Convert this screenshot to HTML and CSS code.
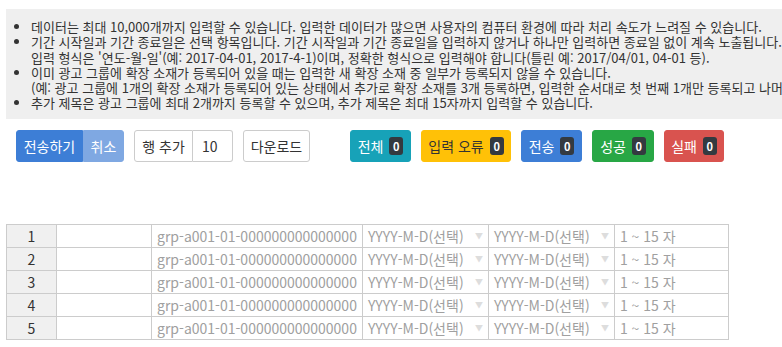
FILE: index.html
```html
<!DOCTYPE html>
<html lang="ko">
<head>
    <meta charset="UTF-8">
    <title>확장 소재 일괄 등록</title>
    <link rel="stylesheet" href="styles.css">
</head>
<body>
    <div class="guide">
        <ul>
            <li>데이터는 최대 10,000개까지 입력할 수 있습니다. 입력한 데이터가 많으면 사용자의 컴퓨터 환경에 따라 처리 속도가 느려질 수 있습니다.</li>
            <li>기간 시작일과 기간 종료일은 선택 항목입니다. 기간 시작일과 기간 종료일을 입력하지 않거나 하나만 입력하면 종료일 없이 계속 노출됩니다.<br>
                입력 형식은 '연도-월-일'(예: 2017-04-01, 2017-4-1)이며, 정확한 형식으로 입력해야 합니다(틀린 예: 2017/04/01, 04-01 등).</li>
            <li>이미 광고 그룹에 확장 소재가 등록되어 있을 때는 입력한 새 확장 소재 중 일부가 등록되지 않을 수 있습니다.<br>
                (예: 광고 그룹에 1개의 확장 소재가 등록되어 있는 상태에서 추가로 확장 소재를 3개 등록하면, 입력한 순서대로 첫 번째 1개만 등록되고 나머지는 등록되지 않습니다.)</li>
            <li>추가 제목은 광고 그룹에 최대 2개까지 등록할 수 있으며, 추가 제목은 최대 15자까지 입력할 수 있습니다.</li>
        </ul>
    </div>

    <div class="toolbar">
        <div class="btn-group">
            <button class="btn btn-primary w-send">전송하기</button>
            <button class="btn btn-light-primary w-cancel">취소</button>
        </div>
        <div class="btn-group">
            <button class="btn btn-default w-add">행 추가</button>
            <input class="row-count" type="text" value="10">
        </div>
        <button class="btn btn-default w-download">다운로드</button>

        <div class="filters">
            <button class="btn btn-info w-all">전체 <span class="badge">0</span></button>
            <button class="btn btn-warning w-error">입력 오류 <span class="badge">0</span></button>
            <button class="btn btn-primary w-all">전송 <span class="badge">0</span></button>
            <button class="btn btn-success w-ok">성공 <span class="badge">0</span></button>
            <button class="btn btn-danger w-fail">실패 <span class="badge">0</span></button>
        </div>
    </div>

    <table class="grid">
        <tbody>
            <tr><th>1</th><td></td><td>grp-a001-01-000000000000000</td><td class="select">YYYY-M-D(선택)<span class="caret">▼</span></td><td class="select">YYYY-M-D(선택)<span class="caret">▼</span></td><td>1 ~ 15 자</td></tr>
            <tr><th>2</th><td></td><td>grp-a001-01-000000000000000</td><td class="select">YYYY-M-D(선택)<span class="caret">▼</span></td><td class="select">YYYY-M-D(선택)<span class="caret">▼</span></td><td>1 ~ 15 자</td></tr>
            <tr><th>3</th><td></td><td>grp-a001-01-000000000000000</td><td class="select">YYYY-M-D(선택)<span class="caret">▼</span></td><td class="select">YYYY-M-D(선택)<span class="caret">▼</span></td><td>1 ~ 15 자</td></tr>
            <tr><th>4</th><td></td><td>grp-a001-01-000000000000000</td><td class="select">YYYY-M-D(선택)<span class="caret">▼</span></td><td class="select">YYYY-M-D(선택)<span class="caret">▼</span></td><td>1 ~ 15 자</td></tr>
            <tr><th>5</th><td></td><td>grp-a001-01-000000000000000</td><td class="select">YYYY-M-D(선택)<span class="caret">▼</span></td><td class="select">YYYY-M-D(선택)<span class="caret">▼</span></td><td>1 ~ 15 자</td></tr>
        </tbody>
    </table>
</body>
</html>
```

FILE: styles.css
```css
body {
    margin: 0;
    font-family: "Noto Sans CJK KR", "Noto Sans", sans-serif;
    font-size: 13px;
    color: #333;
    background: #fff;
    overflow: hidden;
}
.guide {
    margin: 9px 0 0 6px;
    padding: 10px 0 8px 0;
    background: #efefef;
    width: max-content;
    white-space: nowrap;
}
.guide ul {
    margin: 0;
    padding-left: 25px;
    line-height: 15.3px;
}
.toolbar {
    display: flex;
    align-items: center;
    margin: 11px 0 0 16px;
    gap: 10px;
}
.btn-group {
    display: flex;
}
.btn {
    height: 32px;
    padding: 0;
    border: 1px solid transparent;
    border-radius: 3px;
    font-family: inherit;
    font-size: 14px;
    color: #fff;
    text-align: center;
    white-space: nowrap;
    cursor: pointer;
}
/* button widths as in the design */
.w-send { width: 67px; }
.w-cancel { width: 41px; }
.w-add { width: 59px; }
.w-download { width: 67px; }
.w-all { width: 61px; }
.w-error { width: 90px; }
.w-ok { width: 62px; }
.w-fail { width: 60px; }

.btn-group .btn:first-child {
    border-top-right-radius: 0;
    border-bottom-right-radius: 0;
}
.btn-group .btn:last-child {
    border-top-left-radius: 0;
    border-bottom-left-radius: 0;
}
.btn-primary {
    background: #3d7ed6;
    border-color: #3d7ed6;
}
.btn-light-primary {
    background: #7fa8e2;
    border-color: #7fa8e2;
}
.btn-default {
    background: #fff;
    border-color: #ccc;
    color: #333;
}
.row-count {
    width: 40px;
    height: 32px;
    box-sizing: border-box;
    border: 1px solid #ccc;
    border-left: none;
    border-radius: 0 3px 3px 0;
    padding: 0 9px;
    font-family: inherit;
    font-size: 14px;
    color: #333;
}
.filters {
    display: flex;
    gap: 10px;
    margin-left: 30px;
}
.btn-info {
    background: #17a2b8;
    border-color: #17a2b8;
}
.btn-warning {
    background: #ffc107;
    border-color: #ffc107;
    color: #333;
}
.btn-success {
    background: #28a745;
    border-color: #28a745;
}
.btn-danger {
    background: #d9534f;
    border-color: #d9534f;
}
.badge {
    display: inline-block;
    min-width: 14px;
    height: 18px;
    line-height: 18px;
    margin-left: 2px;
    border-radius: 3px;
    background: #343a40;
    color: #fff;
    font-size: 11px;
    font-weight: bold;
    text-align: center;
    vertical-align: 1px;
}
.grid {
    margin: 62px 0 0 6px;
    border-collapse: collapse;
    line-height: 22px;
    font-size: 14px;
}
.grid th, .grid td {
    border: 1px solid #ccc;
    padding: 0 5px;
    height: 22px;
    font-weight: normal;
    white-space: nowrap;
}
.grid th {
    width: 39px;
    background: #f0f0f0;
    color: #333;
}
.grid td {
    color: #a0a0a0;
}
.grid td:nth-child(2) { width: 84px; }
.grid td:nth-child(3) { width: 199px; }
.grid td.select { width: 115px; }
.grid td:nth-child(6) { width: 103px; }
.caret {
    float: right;
    color: #ddd;
    font-size: 8px;
}
```
